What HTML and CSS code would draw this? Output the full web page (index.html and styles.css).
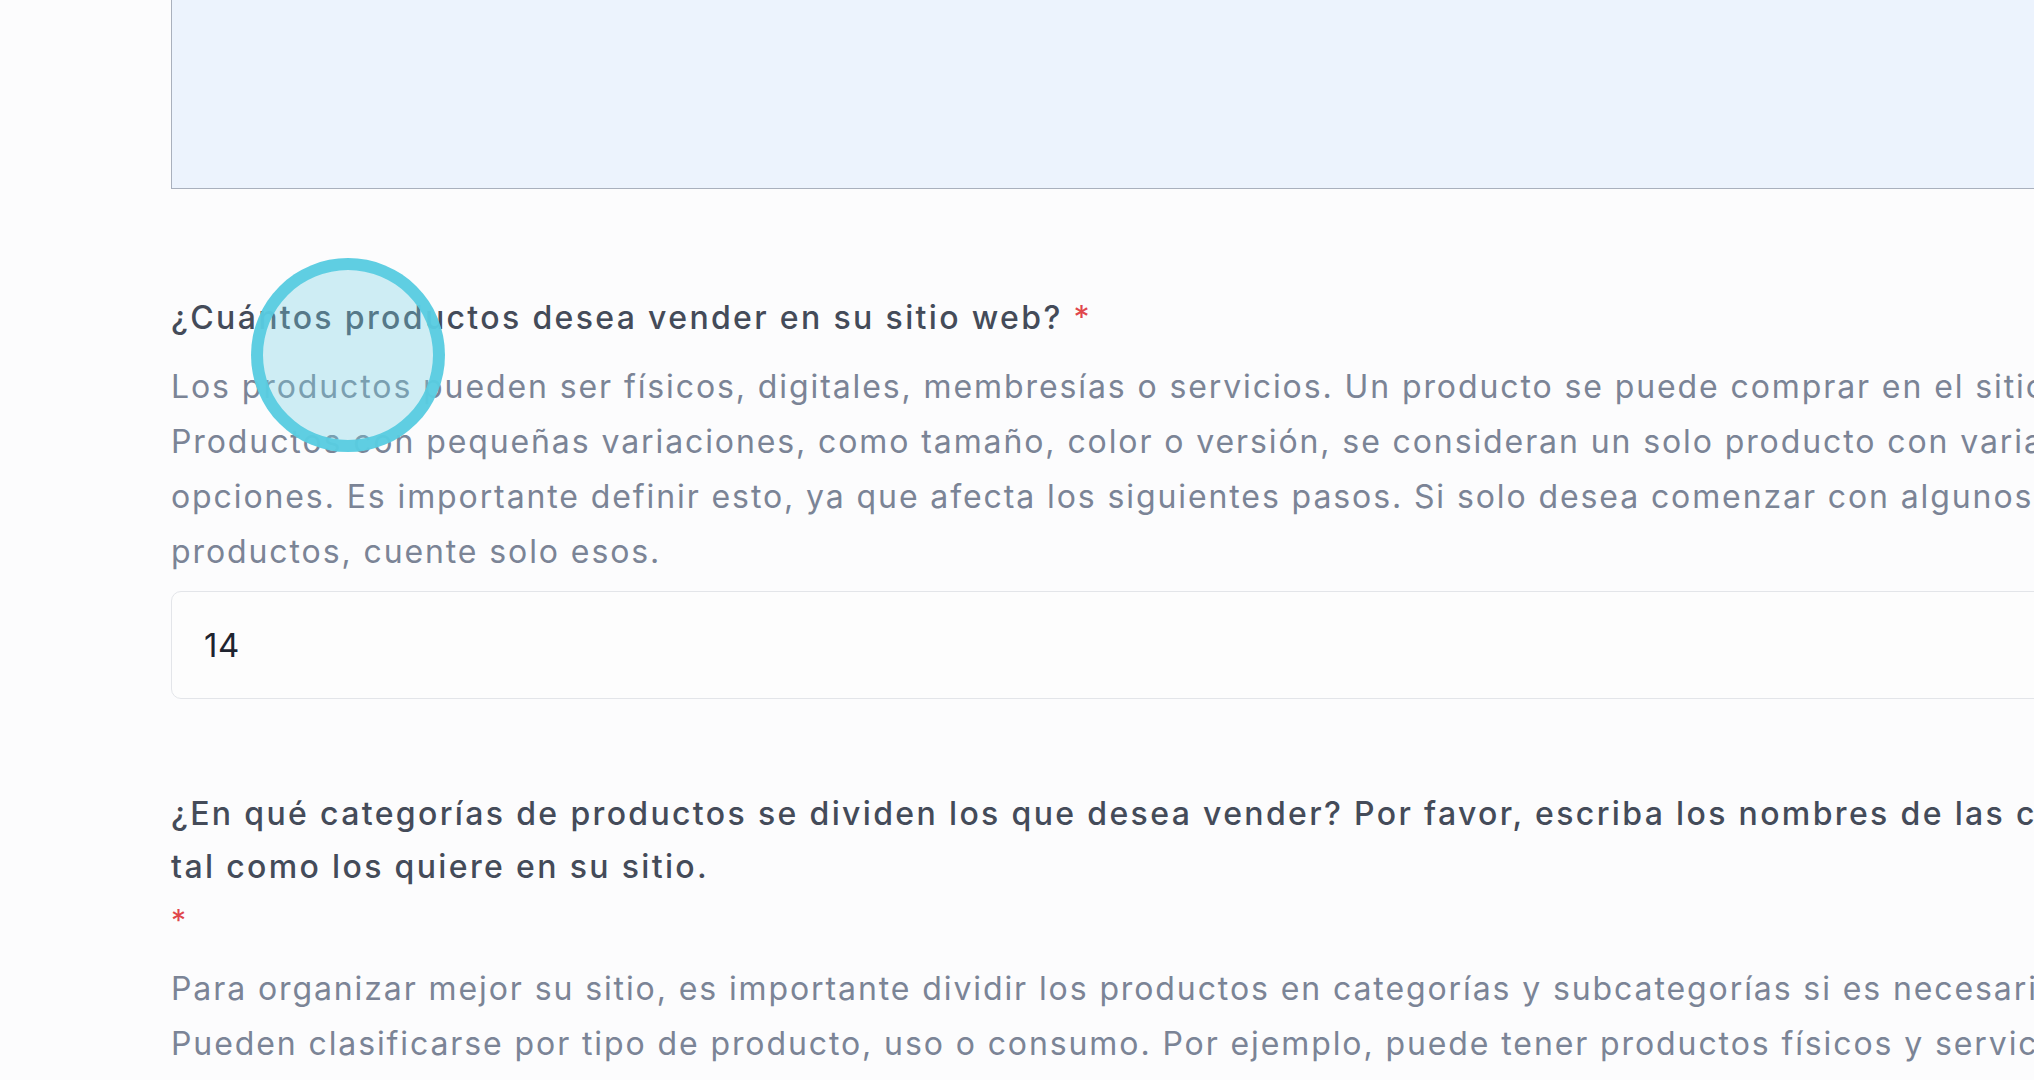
FILE: index.html
```html
<!DOCTYPE html>
<html lang="es">
<head>
<meta charset="utf-8">
<title>Formulario</title>
<link rel="stylesheet" href="styles.css">
</head>
<body>
<main class="form">
  <div class="answer-area"></div>

  <section class="question q-count">
    <label class="q-label" for="count">¿Cuántos productos desea vender en su sitio web? <span class="req">*</span></label>
    <p class="q-help">Los productos pueden ser físicos, digitales, membresías o servicios. Un producto se puede comprar en el sitio web de forma individual.<br>Productos con pequeñas variaciones, como tamaño, color o versión, se consideran un solo producto con variantes u<br>opciones. Es importante definir esto, ya que afecta los siguientes pasos. Si solo desea comenzar con algunos<br>productos, cuente solo esos.</p>
    <input id="count" class="text-input" type="text" value="14">
  </section>

  <section class="question q-cats">
    <label class="q-label">¿En qué categorías de productos se dividen los que desea vender? Por favor, escriba los nombres de las categorías<br>tal como los quiere en su sitio.</label>
    <div class="req req-line">*</div>
    <p class="q-help">Para organizar mejor su sitio, es importante dividir los productos en categorías y subcategorías si es necesario.<br>Pueden clasificarse por tipo de producto, uso o consumo. Por ejemplo, puede tener productos físicos y servicios.</p>
  </section>
</main>
<div class="cursor-ring"></div>
</body>
</html>
```

FILE: styles.css
```css
html, body {
  margin: 0;
  padding: 0;
}
body {
  background: #fcfcfd;
  font-family: "Inter", "Noto Sans", sans-serif;
  overflow: hidden;
  width: 2034px;
  height: 1080px;
  position: relative;
}
.form {
  padding-left: 171px;
  width: 2400px;
}
.answer-area {
  background: #ecf3fd;
  border-left: 1.5px solid #a9b0bd;
  border-bottom: 1.5px solid #a9b0bd;
  box-sizing: border-box;
  height: 189px;
}
.question {
  display: flex;
  flex-direction: column;
  align-items: flex-start;
}
.q-count {
  margin-top: 102px;
}
.q-cats {
  margin-top: 88px;
}
.q-label {
  font-size: 32px;
  font-weight: 500;
  letter-spacing: 2.35px;
  color: #444b59;
  line-height: 53px;
  white-space: nowrap;
}
.req {
  color: #e0474c;
  font-weight: 400;
}
.req-line {
  font-size: 30px;
  line-height: 46px;
  padding-top: 4px;
}
.q-help {
  margin: 15px 0 0;
  font-size: 32px;
  font-weight: 400;
  letter-spacing: 1.9px;
  color: #7b8496;
  line-height: 55px;
  white-space: nowrap;
}
.q-cats .q-help {
  margin-top: 18px;
}
.text-input {
  margin-top: 12px;
  box-sizing: border-box;
  width: 2200px;
  height: 108px;
  border: 1.5px solid #e3e5e9;
  border-radius: 10px;
  background: #fdfdfd;
  padding: 0 0 0 32px;
  font-family: "Inter", "Noto Sans", sans-serif;
  font-size: 33px;
  letter-spacing: 0.5px;
  color: #1f2430;
  outline: none;
}
.cursor-ring {
  position: absolute;
  left: 251px;
  top: 258px;
  width: 194px;
  height: 194px;
  box-sizing: border-box;
  border-radius: 50%;
  border: 12px solid rgba(88, 204, 224, 0.95);
  background: rgba(120, 210, 225, 0.35);
}
```
